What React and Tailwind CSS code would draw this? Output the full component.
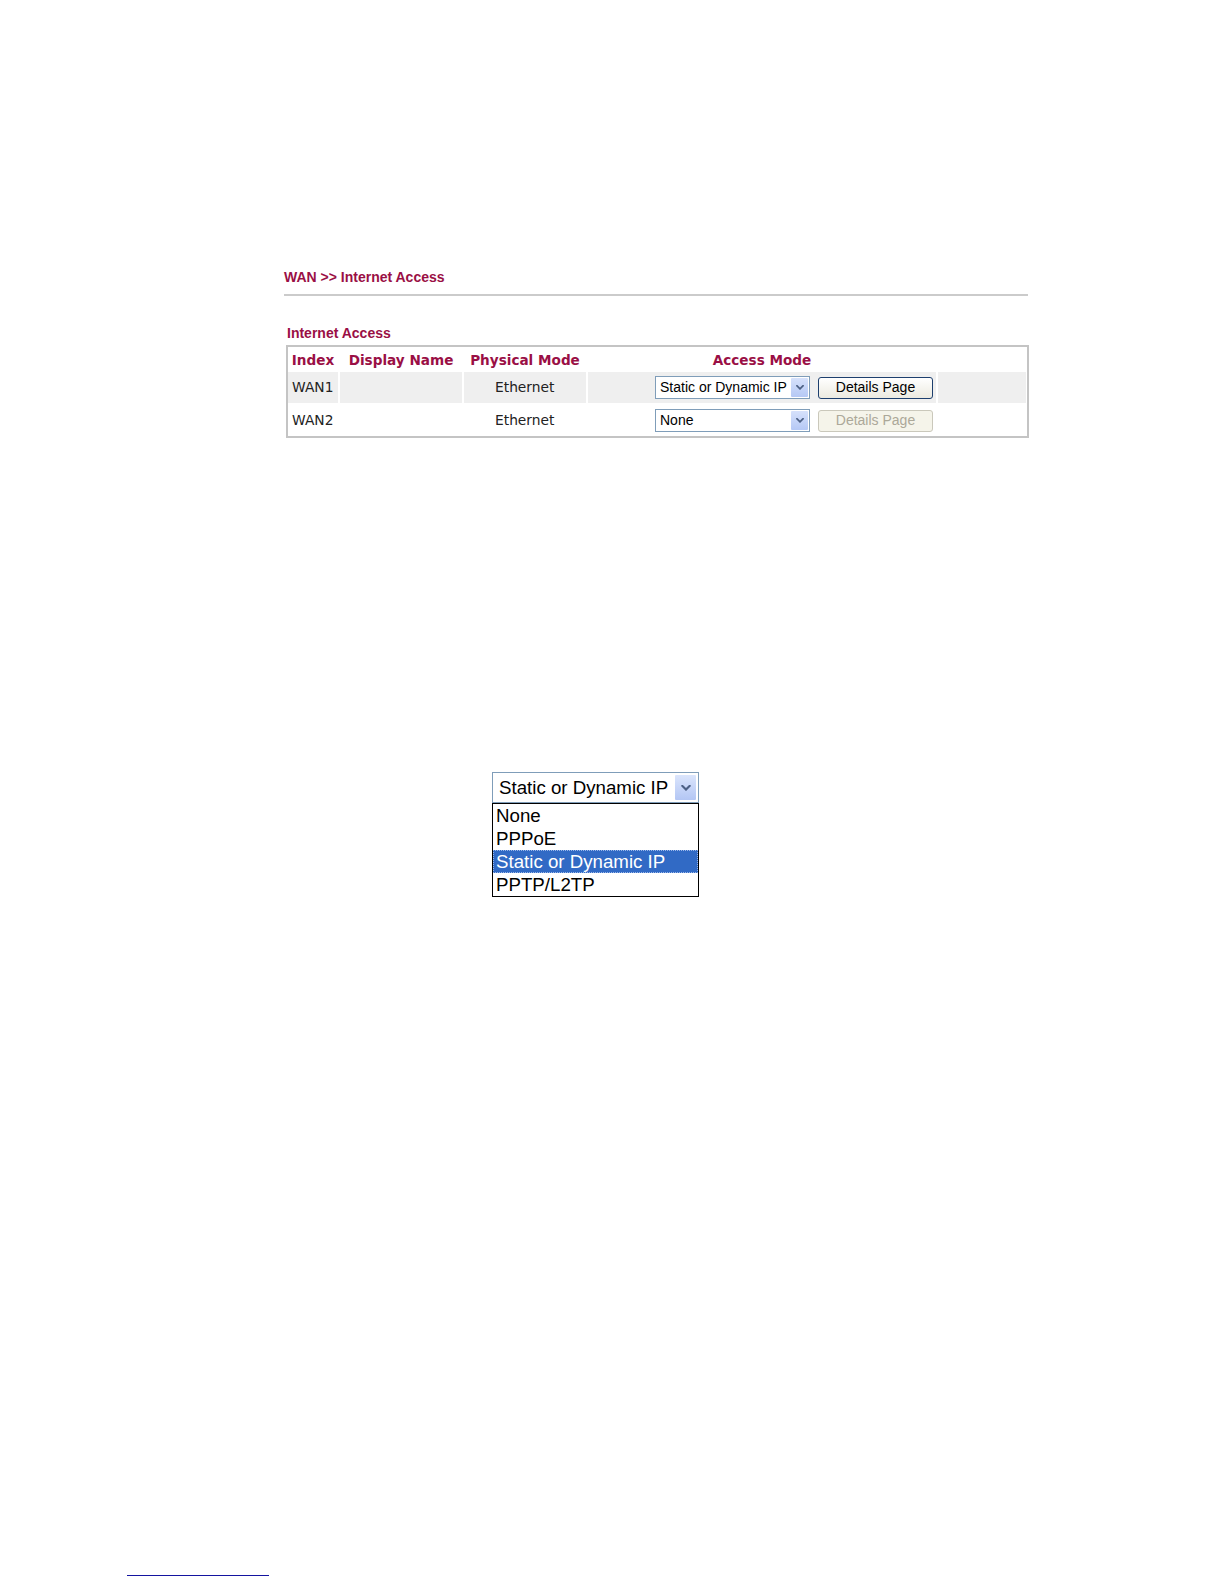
import React from 'react';

const verdana = { fontFamily: '"DejaVu Sans", Verdana, sans-serif' };
const arial = { fontFamily: '"Liberation Sans", Arial, sans-serif' };

function Chevron({ className = '' }) {
  return (
    <svg className={className} viewBox="0 0 8 5" fill="none" xmlns="http://www.w3.org/2000/svg">
      <polyline points="1,0.8 4,3.8 7,0.8" stroke="#4d6185" strokeWidth="1.8" strokeLinecap="square" />
    </svg>
  );
}

function SmallSelect({ value }) {
  return (
    <div className="flex h-[23px] w-[155px] items-center border border-[#7f9db9] bg-white" style={arial}>
      <span className="flex-1 truncate pl-[4px] text-[14px] leading-[21px] text-black">{value}</span>
      <span className="mr-px flex h-[19px] w-[17px] items-center justify-center rounded-[1px] bg-gradient-to-b from-[#d6e1fb] to-[#b5c8f5]">
        <Chevron className="h-[5px] w-[8px]" />
      </span>
    </div>
  );
}

function DetailsButton({ disabled }) {
  if (disabled) {
    return (
      <div
        className="ml-[8px] flex h-[22px] w-[115px] items-center justify-center rounded-[3px] border border-[#cac8bb] bg-[#f5f4ea] text-[14px] text-[#aca899]"
        style={arial}
      >
        Details Page
      </div>
    );
  }
  return (
    <div
      className="ml-[8px] flex h-[22px] w-[115px] items-center justify-center rounded-[3px] border border-[#1d3f6e] bg-gradient-to-b from-white to-[#eceae0] text-[14px] text-black"
      style={arial}
    >
      Details Page
    </div>
  );
}

const rows = [
  { index: 'WAN1', mode: 'Ethernet', access: 'Static or Dynamic IP', shaded: true, disabled: false },
  { index: 'WAN2', mode: 'Ethernet', access: 'None', shaded: false, disabled: true },
];

const options = ['None', 'PPPoE', 'Static or Dynamic IP', 'PPTP/L2TP'];

export default function App() {
  return (
    <div className="flex h-[1584px] w-[1224px] flex-col bg-white">
      <div className="ml-[284px] w-[744px] pt-[269px]">
        <h1 className="h-[16px] text-[14px] font-bold leading-[16px] text-[#9a0f45]" style={arial}>
          WAN &gt;&gt; Internet Access
        </h1>
        <div className="mt-[9px] h-[2px] bg-[#cbcbcb]" />

        <div className="ml-[3px] mt-[29px] h-[16px] text-[14px] font-bold leading-[16px] text-[#9a0f45]" style={arial}>
          Internet Access
        </div>

        <div className="ml-[2px] mt-[4px] w-[743px] border-2 border-[#c4c4c4] bg-white pr-px" style={verdana}>
          <div className="grid grid-cols-[50px_122px_122px_348px_88px] gap-x-[2px] gap-y-[2px]">
            {['Index', 'Display Name', 'Physical Mode', 'Access Mode', ''].map((h, i) => (
              <div
                key={i}
                className="flex h-[23px] items-center justify-center pt-[3px] text-[13.6px] font-bold text-[#9a0f45]"
              >
                {h}
              </div>
            ))}

            {rows.map((row) => {
              const bg = row.shaded ? 'bg-[#efefef]' : 'bg-white';
              return (
                <React.Fragment key={row.index}>
                  <div className={`flex h-[31px] items-center pl-[4px] text-[13.8px] text-[#222] ${bg}`}>{row.index}</div>
                  <div className={`h-[31px] ${bg}`} />
                  <div className={`flex h-[31px] items-center pl-[31px] text-[13.8px] text-[#222] ${bg}`}>{row.mode}</div>
                  <div className={`flex h-[31px] items-center pl-[67px] ${bg}`}>
                    <SmallSelect value={row.access} />
                    <DetailsButton disabled={row.disabled} />
                  </div>
                  <div className={`h-[31px] ${bg}`} />
                </React.Fragment>
              );
            })}
          </div>
        </div>
      </div>

      <div className="ml-[492px] mt-[334px] w-[207px]" style={arial}>
        <div className="flex h-[31px] items-center border border-[#7f9db9] bg-white">
          <span className="flex-1 pl-[6px] text-[18.7px] leading-[28px] text-black">Static or Dynamic IP</span>
          <span className="mr-[2px] flex h-[25px] w-[21px] items-center justify-center rounded-[1px] bg-gradient-to-b from-[#dbe5fc] to-[#b3c6f4]">
            <Chevron className="h-[6px] w-[10px]" />
          </span>
        </div>
        <div className="border border-black bg-white">
          {options.map((opt) => {
            const selected = opt === 'Static or Dynamic IP';
            return (
              <div
                key={opt}
                className={
                  selected
                    ? 'h-[23px] border border-dotted border-[#9cb8ea] bg-[#316ac5] pl-[2px] text-[18.7px] leading-[21px] text-white'
                    : 'h-[23px] pl-[3px] text-[18.7px] leading-[23px] text-black'
                }
              >
                {opt}
              </div>
            );
          })}
        </div>
      </div>

      <div className="ml-[127px] mt-[678px] h-px w-[142px] bg-[#1414a0]" />
    </div>
  );
}
